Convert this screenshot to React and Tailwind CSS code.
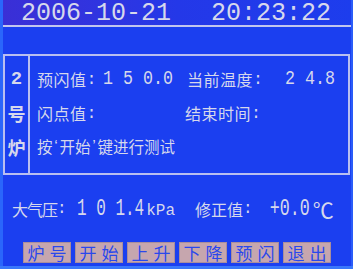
import React from 'react';

const cjk = "font-['Noto_Sans_CJK_SC',sans-serif]";
const mono = "font-['Liberation_Mono','Noto_Sans_CJK_SC',monospace]";
const sans = "font-['Liberation_Sans',sans-serif]";

const Num = ({ children, className = '' }) => (
  <span className={`${mono} inline-block whitespace-pre text-[16.67px] leading-none scale-y-[1.25] ${className}`}>
    {children}
  </span>
);

const Row = ({ children }) => <div className="flex h-[34px] items-center">{children}</div>;

const keys = ['炉号', '开始', '上升', '下降', '预闪', '退出'];

export default function App() {
  return (
    <div className="flex h-[269px] w-[353px] flex-col overflow-hidden bg-[#1b3ff0] text-[#d6d8ec]">
      <div className="flex flex-1">
        {/* left edge of the panel */}
        <div className="w-[3px] bg-[#2a66fb]" />

        <div className="flex w-[348px] flex-col">
          {/* date / time */}
          <div className="flex h-[27px] items-center border-b-2 border-[#c2c6ee] bg-linear-to-r from-[#3a2fd6] via-[#2438e8] to-[#1d3ded] pl-[18px] pt-[1px]">
            <span className={`${mono} whitespace-pre text-[25px] leading-none`}>2006-10-21</span>
            <span className={`${mono} ml-[40px] whitespace-pre text-[25px] leading-none`}>20:23:22</span>
          </div>

          {/* test box */}
          <div className="mt-[27px] flex h-[121px] w-[347px] border-2 border-[#b9bff0]">
            <div className="flex w-[25px] flex-col border-r-2 border-[#b9bff0] pt-[6px] font-bold">
              <div className={`${mono} flex h-[34px] items-center justify-center text-[19px]`}>2</div>
              <div className={`${cjk} flex h-[34px] items-center justify-center text-[18px]`}>号</div>
              <div className={`${cjk} flex h-[34px] items-center justify-center text-[18px]`}>炉</div>
            </div>

            <div className="flex flex-1 flex-col pl-[7px] pt-[6px] text-[16px]">
              <Row>
                <div className="flex w-[150px] items-center">
                  <div className="flex w-[66px] items-center">
                    <span className={`${cjk} tracking-[0.5px]`}>预闪值</span>
                    <span className={`${mono} text-[16.67px]`}>:</span>
                  </div>
                  <Num>1 5 0.0</Num>
                </div>
                <div className="flex w-[98px] items-center">
                  <span className={`${cjk} tracking-[0.5px]`}>当前温度</span>
                  <span className={`${mono} text-[16.67px]`}>:</span>
                </div>
                <Num>2 4.8</Num>
              </Row>
              <Row>
                <div className="flex w-[148px] items-center">
                  <span className={`${cjk} tracking-[0.5px]`}>闪点值</span>
                  <span className={`${mono} text-[16.67px]`}>:</span>
                </div>
                <span className={`${cjk} tracking-[0.5px]`}>结束时间</span>
                <span className={`${mono} text-[16.67px]`}>:</span>
              </Row>
              <Row>
                <span className={`${cjk} text-[15.5px]`}>按</span>
                <span className={`${sans} inline-block w-[7px] text-center text-[16px]`}>‘</span>
                <span className={`${cjk} text-[15.5px]`}>开始</span>
                <span className={`${sans} inline-block w-[7px] text-center text-[16px]`}>’</span>
                <span className={`${cjk} text-[15.5px]`}>键进行测试</span>
              </Row>
            </div>
          </div>

          {/* pressure / correction */}
          <div className="mt-[17px] flex h-[34px] items-center pl-[9px] text-[16px]">
            <div className="flex w-[65px] items-center">
              <span className={`${cjk} tracking-[-1px]`}>大气压</span>
              <span className={`${mono} text-[16px]`}>:</span>
            </div>
            <span className={`${mono} inline-block whitespace-pre text-[16px] leading-none scale-y-[1.45]`}>1 0 1.4</span>
            <span className={`${mono} ml-[2px] mt-[4px] text-[16px] leading-none`}>kPa</span>
            <span className={`${cjk} ml-[20px]`}>修正值</span>
            <span className={`${mono} text-[16px]`}>:</span>
            <span className={`${mono} ml-[17px] inline-block whitespace-pre text-[16.67px] leading-none scale-y-[1.45]`}>+0.0</span>
            <span className={`${cjk} ml-[3px] text-[21px] leading-none`}>℃</span>
          </div>

          {/* soft keys */}
          <div className="mt-[16px] flex gap-[4px] pl-[20px]">
            {keys.map((k) => (
              <div
                key={k}
                className={`${cjk} flex h-[21px] w-[48px] items-center justify-center gap-[5px] border border-[#a98e9c] bg-[#c6a6ae] text-[17px] leading-none text-[#2a48ec]`}
              >
                <span>{k[0]}</span>
                <span>{k[1]}</span>
              </div>
            ))}
          </div>
        </div>

        <div className="w-[2px] bg-[#2a5cf8]" />
      </div>
      <div className="h-[3px] bg-[#3a78fb]" />
    </div>
  );
}
